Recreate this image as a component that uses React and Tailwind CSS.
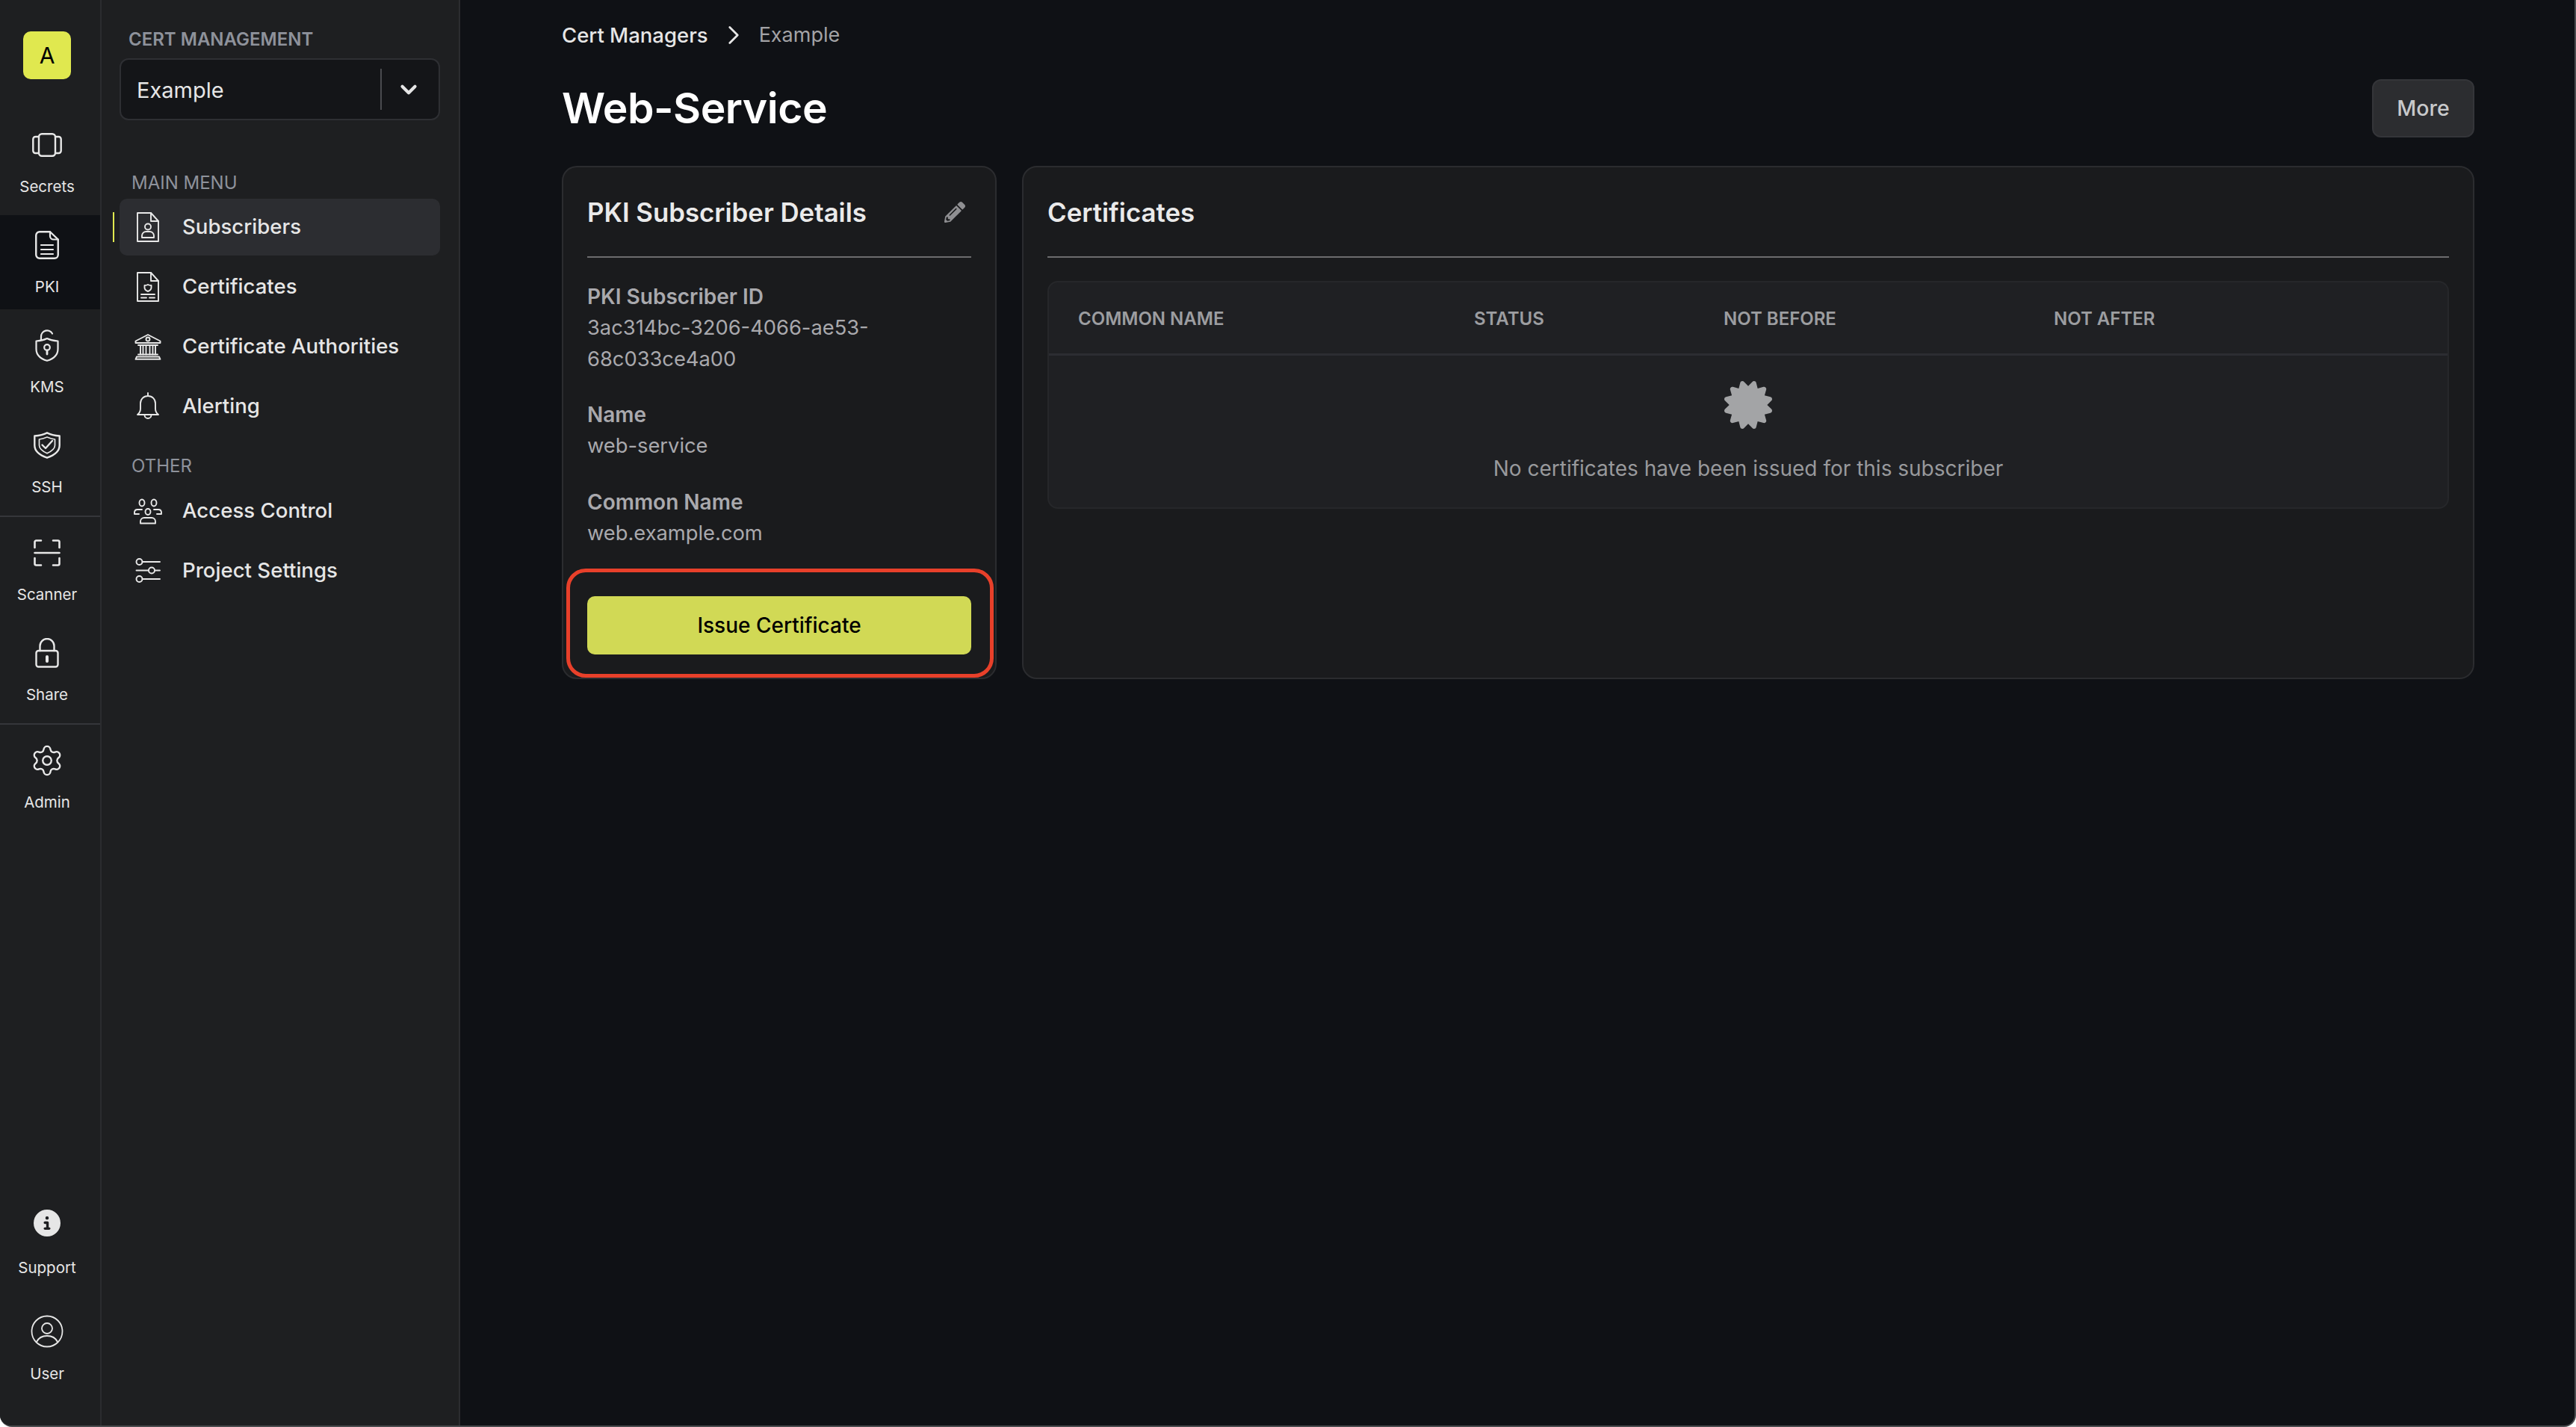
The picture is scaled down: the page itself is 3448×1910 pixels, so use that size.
import React from "react";
import { ChevronDown, ChevronRight, Settings } from "lucide-react";
import { FaCertificate, FaPencilAlt } from "react-icons/fa";
import { FaCircleInfo } from "react-icons/fa6";

const Svg = ({ w, h, vb, children }) => (
  <svg width={w} height={h} viewBox={vb} fill="none" stroke="currentColor" strokeWidth="1.9" strokeLinejoin="round" strokeLinecap="round">
    {children}
  </svg>
);

const VaultIcon = () => (
  <Svg w={40} h={32} vb="0 0 40 32">
    <rect x="9" y="1.250" width="22" height="29.500" rx="4" strokeWidth="2.400" />
    <path d="M9 5H4.500A3.200 3.200 0 0 0 1.300 8.200v15.600A3.200 3.200 0 0 0 4.500 27H9M31 5h4.500a3.200 3.200 0 0 1 3.200 3.200v15.600a3.200 3.200 0 0 1-3.200 3.200H31" strokeWidth="2.400" />
  </Svg>
);
const FileIcon = () => (
  <Svg w={32} h={38} vb="0 0 32 38">
    <path d="M20 1.250H6A4.750 4.750 0 0 0 1.250 6v26A4.750 4.750 0 0 0 6 36.750h20A4.750 4.750 0 0 0 30.750 32V11.500z" strokeWidth="2.400" />
    <path d="M20 1.250V7a4.500 4.500 0 0 0 4.500 4.500h6.250M8 19h16M8 25h16M8 31h16" strokeWidth="2.200" />
  </Svg>
);
const UnlockIcon = () => (
  <Svg w={32} h={44} vb="0 0 32 44">
    <path d="M8 15v-4.500a8 8 0 0 1 15-4" strokeWidth="2.200" />
    <path d="M16 13c5 2.500 9 3.200 14.500 3.500V27c0 8.500-6.500 13.500-14.500 15.800C8 40.500 1.500 35.500 1.500 27V16.500C7 16.200 11 15.500 16 13z" strokeWidth="2.200" />
    <circle cx="16" cy="25" r="3.800" strokeWidth="2.200" />
    <path d="M16 29v5" strokeWidth="2.800" />
  </Svg>
);
const ShieldIcon = () => (
  <Svg w={36} h={36} vb="0 0 36 36">
    <path d="M18 1.300C23.500 4 29 5 34.700 5.500V18c0 8-7.500 13.500-16.700 16.700C8.800 31.500 1.300 26 1.300 18V5.500C7 5 12.500 4 18 1.300z" strokeWidth="2.400" />
    <path d="M7.500 10c4-.5 7-1.500 10.500-3 3.500 1.500 6.500 2.500 10.500 3v8c0 4.500-4.500 8-10.500 10.800C12 26 7.500 22.500 7.500 18z" strokeWidth="1.700" />
    <path d="m11.500 17.500 4.500 4.500 9-10" strokeWidth="2.400" />
  </Svg>
);
const ScanIcon = () => (
  <Svg w={36} h={36} vb="0 0 36 36">
    <path d="M1.500 11V3.500a2 2 0 0 1 2-2H10M26 1.500h6.500a2 2 0 0 1 2 2V11M1.500 25v7.500a2 2 0 0 0 2 2H10M26 34.500h6.500a2 2 0 0 0 2-2V25M1.500 18h33" strokeWidth="2.600" />
  </Svg>
);
const LockIcon = () => (
  <Svg w={32} h={40} vb="0 0 32 40">
    <path d="M6.500 17v-6.500a9.500 9.500 0 0 1 19 0V17" strokeWidth="2.400" />
    <rect x="1.500" y="17" width="29" height="21.500" rx="3" strokeWidth="2.400" />
    <path d="M16 25v6" strokeWidth="4" />
  </Svg>
);
const UserCircleIcon = () => (
  <Svg w={44} h={44} vb="0 0 44 44">
    <circle cx="22" cy="22" r="20.500" strokeWidth="1.800" />
    <circle cx="22" cy="18" r="7" strokeWidth="1.800" />
    <path d="M8 36c3-6 8-8 14-8s11 2 14 8" strokeWidth="1.800" />
  </Svg>
);

const DocPerson = () => (
  <Svg w={30} h={40} vb="0 0 30 40">
    <path d="M1 1h18l10 11v27H1z" />
    <path d="M19 1v11h10" />
    <circle cx="15" cy="19.500" r="4" />
    <path d="M7 34v-2.500a5.500 5.500 0 0 1 5.500-5.500h5a5.500 5.500 0 0 1 5.500 5.500V34z" />
  </Svg>
);
const DocCert = () => (
  <Svg w={30} h={40} vb="0 0 30 40">
    <path d="M1 1h18l10 11v27H1z" />
    <path d="M19 1v11h10" />
    <path d="M15 17c1.500.8 3 1 4.500 1v3c0 2.500-2 4-4.500 5-2.500-1-4.500-2.500-4.500-5v-3c1.500 0 3-.2 4.500-1z" />
    <path d="M6 30h18M6 34.500h7M17 34.500h7" />
  </Svg>
);
const BankIcon = () => (
  <Svg w={36} h={35} vb="0 0 36 35">
    <path d="M1.500 9.500 18 1l16.500 8.500V12h-33zM5 15h26M5 27.500h26" />
    <circle cx="18" cy="7" r="2.500" />
    <path d="M8 15v12.500M11.500 15v12.500M15.500 15v12.500M20.500 15v12.500M24.500 15v12.500M28 15v12.500M3 30.500h30M1.500 33.800h33l-1.500-3.300H3z" />
  </Svg>
);
const BellIcon = () => (
  <Svg w={30} h={38} vb="0 0 30 38">
    <path d="M15 1v4M15 5C9 5 5 9.500 5 15v7c0 3-1.500 6-4 8h28c-2.500-2-4-5-4-8v-7c0-5.500-4-10-10-10z" />
    <path d="M10.500 30.500a4.500 4.500 0 1 0 9 0" />
  </Svg>
);
const PeopleIcon = () => (
  <Svg w={38} h={35} vb="0 0 38 35">
    <ellipse cx="11" cy="6" rx="3.500" ry="4.500" />
    <ellipse cx="27" cy="6" rx="3.500" ry="4.500" />
    <ellipse cx="19" cy="18" rx="3.500" ry="4" />
    <path d="M1 21v-2.500a4 4 0 0 1 4-3.500h6M37 21v-2.500a4 4 0 0 0-4-3.500h-6M1 21h6M31 21h6" />
    <path d="M9 33.500V31a5 5 0 0 1 5-5h10a5 5 0 0 1 5 5v2.500z" />
  </Svg>
);
const SlidersIcon = () => (
  <Svg w={34} h={34} vb="0 0 34 34">
    <circle cx="5.500" cy="5" r="4" />
    <circle cx="22" cy="16.500" r="4" />
    <circle cx="5.500" cy="28" r="4" />
    <path d="M9.500 5H33M1.500 16.500H18M26 16.500h7M9.500 28H33" />
  </Svg>
);

const railTop = [
  { label: "Secrets", icon: <VaultIcon /> },
  { label: "PKI", icon: <FileIcon />, active: true },
  { label: "KMS", icon: <UnlockIcon /> },
  { label: "SSH", icon: <ShieldIcon /> },
];
const railMid = [
  { label: "Scanner", icon: <ScanIcon /> },
  { label: "Share", icon: <LockIcon /> },
];

function RailItem({ label, icon, active }) {
  return (
    <div className={`flex h-[126px] flex-col items-center pr-[8px] ${active ? "bg-[#0f1115]" : ""}`}>
      <div className="flex h-[80px] items-center justify-center text-[#e8e8e8]">{icon}</div>
      <div className="mt-[1px] text-[20.5px] leading-[30px] text-[#e6e6e6]">{label}</div>
    </div>
  );
}

function MenuItem({ label, icon, active }) {
  return (
    <div className="relative">
      {active && <div className="absolute -left-[9px] top-[18px] h-[40px] w-[2px] bg-[#e0e84f]" />}
      <div className={`flex h-[76px] items-center rounded-[10px] ${active ? "bg-[#2c2d31]" : ""}`}>
        <div className="flex w-[84px] items-center justify-center pr-[8px] text-[#e8e8e8]">{icon}</div>
        <span className="text-[27.6px] font-[450] text-[#e6e6e6]">{label}</span>
      </div>
    </div>
  );
}

function Field({ label, children, className }) {
  return (
    <div className={className}>
      <div className="text-[28px] leading-[42px] font-semibold text-[#a9a9ad]">{label}</div>
      <div className="text-[27.3px] leading-[42px] text-[#a9a9ad]">{children}</div>
    </div>
  );
}

export default function App() {
  return (
    <div className="flex h-screen overflow-hidden rounded-br-[16px] rounded-bl-[16px] border-r-2 border-b-2 border-[#4a4b4e] bg-[#0f1115] font-['Inter',sans-serif]">
      <aside className="flex w-[136px] shrink-0 flex-col border-r-2 border-[#2b2c2f] bg-[#1e1f21]">
        <div className="flex justify-center pt-[42px] pr-[8px]">
          <div className="flex h-[64px] w-[64px] items-center justify-center rounded-[10px] bg-[#e0e84f] text-[30px] text-black">A</div>
        </div>
        <div className="mt-[48px] flex flex-col gap-[8px]">
          {railTop.map((r) => <RailItem key={r.label} {...r} />)}
        </div>
        <div className="mt-[8px] h-[2px] bg-[#35363a]" />
        <div className="mt-[8px] flex flex-col gap-[8px]">
          {railMid.map((r) => <RailItem key={r.label} {...r} />)}
        </div>
        <div className="mt-[8px] h-[2px] bg-[#35363a]" />
        <div className="mt-[8px]">
          <RailItem label="Admin" icon={<Settings size={46} strokeWidth={1.25} />} />
        </div>
        <div className="mt-auto mb-[54px] flex flex-col items-center pr-[8px] text-[#e6e6e6]">
          <FaCircleInfo size={36} />
          <div className="mt-[27px] text-[20.5px] leading-[30px]">Support</div>
          <div className="mt-[48px]"><UserCircleIcon /></div>
          <div className="mt-[20px] text-[20.5px] leading-[30px]">User</div>
        </div>
      </aside>

      <aside className="w-[480px] shrink-0 border-r-2 border-[#2b2c2f] bg-[#1e1f21] pt-[37px] pr-[25px] pl-[24px]">
        <div className="pl-[12px] text-[24px] leading-[32px] font-semibold text-[#8e929b]">CERT MANAGEMENT</div>
        <div className="mt-[9px] flex h-[83px] items-center rounded-[12px] border-2 border-[#2e2f33] bg-[#141518] pl-[21px]">
          <span className="flex-1 pt-[2px] text-[29px] text-[#e6e6e6]">Example</span>
          <div className="h-[55px] w-[2px] bg-[#4a4b4f]" />
          <div className="flex w-[76px] justify-center pr-[4px] text-[#e6e6e6]"><ChevronDown size={34} strokeWidth={3} /></div>
        </div>
        <div className="mt-[68px] pl-[16px] text-[24px] leading-[32px] text-[#8e929b]">MAIN MENU</div>
        <div className="mt-[5px] flex flex-col gap-[4px]">
          <MenuItem label="Subscribers" icon={<DocPerson />} active />
          <MenuItem label="Certificates" icon={<DocCert />} />
          <MenuItem label="Certificate Authorities" icon={<BankIcon />} />
          <MenuItem label="Alerting" icon={<BellIcon />} />
        </div>
        <div className="mt-[26px] pl-[16px] text-[24px] leading-[32px] text-[#8e929b]">OTHER</div>
        <div className="mt-[6px] flex flex-col gap-[4px]">
          <MenuItem label="Access Control" icon={<PeopleIcon />} />
          <MenuItem label="Project Settings" icon={<SlidersIcon />} />
        </div>
      </aside>

      <main className="min-w-0 flex-1 pt-[26px] pr-[134px] pl-[136px]">
        <div className="flex items-center text-[27.5px] leading-[42px]">
          <span className="font-medium text-[#e6e6e6]">Cert Managers</span>
          <ChevronRight size={42} strokeWidth={1.6} className="mx-[13px] text-[#e6e6e6]" />
          <span className="text-[27px] text-[#a3a3a6]">Example</span>
        </div>
        <div className="mt-[38px] flex h-[78px] items-center justify-between">
          <h1 className="text-[57px] font-semibold tracking-[-0.5px] text-white">Web-Service</h1>
          <button className="h-[78px] w-[137px] rounded-[12px] border-2 border-[#343539] bg-[#2c2d30] text-[28.5px] font-medium text-[#c8c9cb]">More</button>
        </div>

        <div className="mt-[38px] flex gap-[34px]">
          <section className="relative w-[582px] shrink-0 rounded-[20px] border-2 border-[#2b2c2f] bg-[#1a1b1d] px-[32px] pt-[32px] pb-[31px]">
            <div className="flex h-[54px] items-center justify-between pt-[2px] pr-[8px]">
              <h2 className="text-[34.8px] font-semibold text-[#eaeaea]">PKI Subscriber Details</h2>
              <FaPencilAlt size={28} className="text-[#8f8f92]" />
            </div>
            <div className="mt-[33px] h-[2px] bg-[#6c6c6e]" />
            <Field label="PKI Subscriber ID" className="mt-[31px]">3ac314bc-3206-4066-ae53-68c033ce4a00</Field>
            <Field label="Name" className="mt-[32px]">web-service</Field>
            <Field label="Common Name" className="mt-[33px]">web.example.com</Field>
            <button className="mt-[63px] h-[78px] w-full rounded-[10px] bg-[#d1d955] text-[28px] font-medium text-black">Issue Certificate</button>
            <div className="pointer-events-none absolute right-[2px] bottom-0 left-[4px] h-[146px] rounded-[26px] border-[5px] border-[#e8402a]" />
          </section>

          <section className="min-w-0 flex-1 rounded-[20px] border-2 border-[#2b2c2f] bg-[#1a1b1d] px-[32px] pt-[32px]">
            <div className="flex h-[54px] items-center pt-[2px]">
              <h2 className="text-[34.8px] font-semibold text-[#eaeaea]">Certificates</h2>
            </div>
            <div className="mt-[33px] h-[2px] bg-[#6c6c6e]" />
            <div className="mt-[31px] rounded-[14px] border-2 border-[#26272a] bg-[#1f2023]">
              <div className="grid h-[98px] grid-cols-[530px_334px_442px_1fr] items-center border-b-[3px] border-[#2c2d32] pt-[3px] pl-[39px] text-[24px] font-semibold text-[#9c9da0]">
                <div>COMMON NAME</div>
                <div>STATUS</div>
                <div>NOT BEFORE</div>
                <div>NOT AFTER</div>
              </div>
              <div className="flex h-[203px] flex-col items-center pt-[34px]">
                <FaCertificate size={64} className="text-[#a3a4a6]" />
                <div className="mt-[32px] text-[28px] leading-[42px] text-[#98999c]">No certificates have been issued for this subscriber</div>
              </div>
            </div>
          </section>
        </div>
      </main>
    </div>
  );
}
